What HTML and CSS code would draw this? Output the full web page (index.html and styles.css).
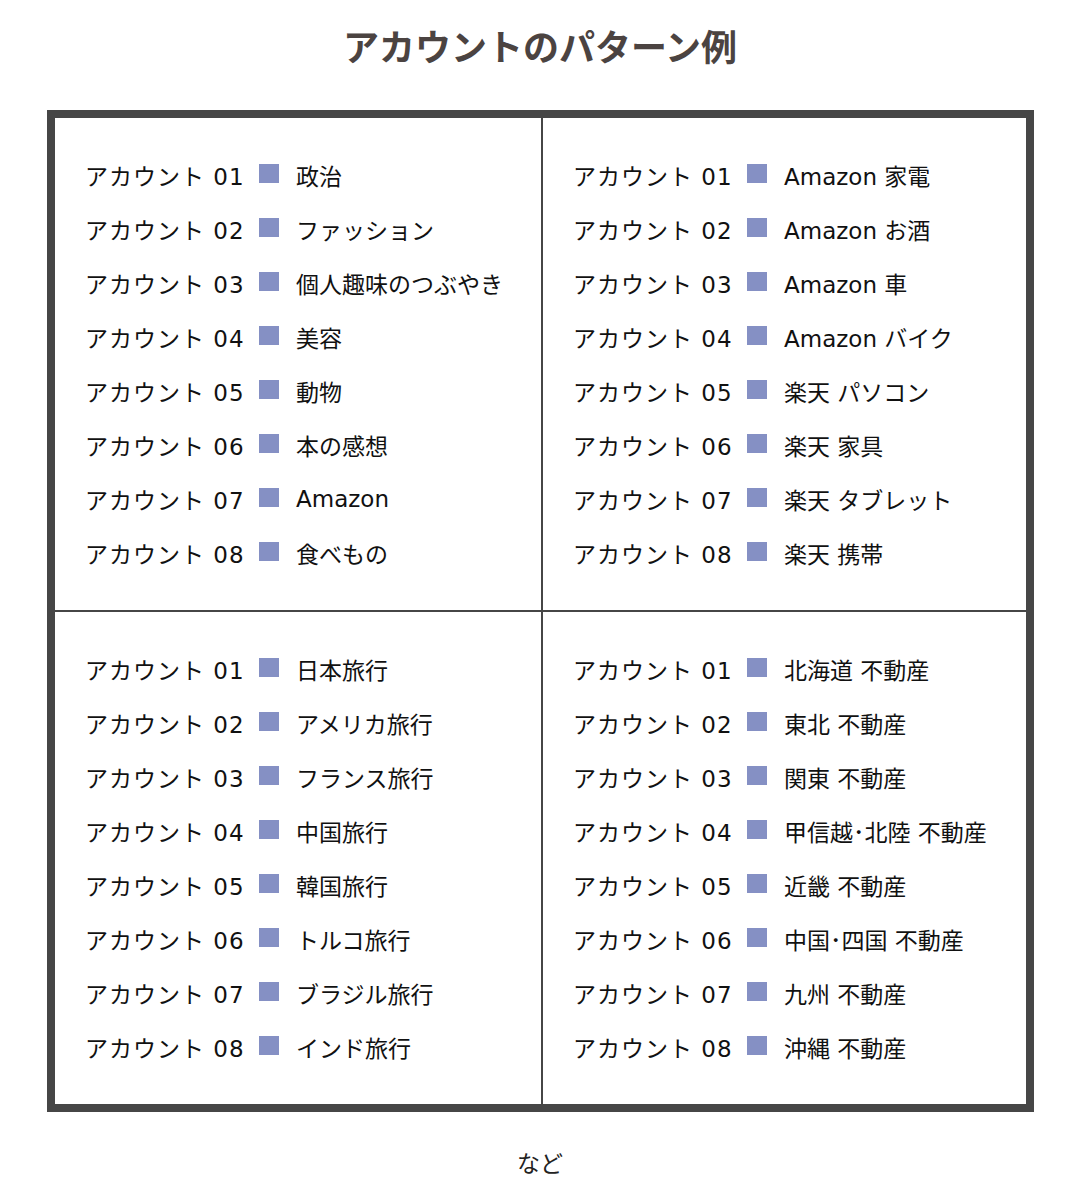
FILE: index.html
```html
<!DOCTYPE html>
<html lang="ja">
<head>
<meta charset="utf-8">
<title>アカウントのパターン例</title>
<link rel="stylesheet" href="styles.css">
</head>
<body>
<h1 class="title">アカウントのパターン例</h1>
<div class="frame">
  <div class="cell">
    <div class="row"><span class="label">アカウント 01</span><span class="sq"></span><span class="txt">政治</span></div>
    <div class="row"><span class="label">アカウント 02</span><span class="sq"></span><span class="txt">ファッション</span></div>
    <div class="row"><span class="label">アカウント 03</span><span class="sq"></span><span class="txt">個人趣味のつぶやき</span></div>
    <div class="row"><span class="label">アカウント 04</span><span class="sq"></span><span class="txt">美容</span></div>
    <div class="row"><span class="label">アカウント 05</span><span class="sq"></span><span class="txt">動物</span></div>
    <div class="row"><span class="label">アカウント 06</span><span class="sq"></span><span class="txt">本の感想</span></div>
    <div class="row"><span class="label">アカウント 07</span><span class="sq"></span><span class="txt">Amazon</span></div>
    <div class="row"><span class="label">アカウント 08</span><span class="sq"></span><span class="txt">食べもの</span></div>
  </div>
  <div class="cell">
    <div class="row"><span class="label">アカウント 01</span><span class="sq"></span><span class="txt">Amazon 家電</span></div>
    <div class="row"><span class="label">アカウント 02</span><span class="sq"></span><span class="txt">Amazon お酒</span></div>
    <div class="row"><span class="label">アカウント 03</span><span class="sq"></span><span class="txt">Amazon 車</span></div>
    <div class="row"><span class="label">アカウント 04</span><span class="sq"></span><span class="txt">Amazon バイク</span></div>
    <div class="row"><span class="label">アカウント 05</span><span class="sq"></span><span class="txt">楽天 パソコン</span></div>
    <div class="row"><span class="label">アカウント 06</span><span class="sq"></span><span class="txt">楽天 家具</span></div>
    <div class="row"><span class="label">アカウント 07</span><span class="sq"></span><span class="txt">楽天 タブレット</span></div>
    <div class="row"><span class="label">アカウント 08</span><span class="sq"></span><span class="txt">楽天 携帯</span></div>
  </div>
  <div class="cell">
    <div class="row"><span class="label">アカウント 01</span><span class="sq"></span><span class="txt">日本旅行</span></div>
    <div class="row"><span class="label">アカウント 02</span><span class="sq"></span><span class="txt">アメリカ旅行</span></div>
    <div class="row"><span class="label">アカウント 03</span><span class="sq"></span><span class="txt">フランス旅行</span></div>
    <div class="row"><span class="label">アカウント 04</span><span class="sq"></span><span class="txt">中国旅行</span></div>
    <div class="row"><span class="label">アカウント 05</span><span class="sq"></span><span class="txt">韓国旅行</span></div>
    <div class="row"><span class="label">アカウント 06</span><span class="sq"></span><span class="txt">トルコ旅行</span></div>
    <div class="row"><span class="label">アカウント 07</span><span class="sq"></span><span class="txt">ブラジル旅行</span></div>
    <div class="row"><span class="label">アカウント 08</span><span class="sq"></span><span class="txt">インド旅行</span></div>
  </div>
  <div class="cell">
    <div class="row"><span class="label">アカウント 01</span><span class="sq"></span><span class="txt">北海道 不動産</span></div>
    <div class="row"><span class="label">アカウント 02</span><span class="sq"></span><span class="txt">東北 不動産</span></div>
    <div class="row"><span class="label">アカウント 03</span><span class="sq"></span><span class="txt">関東 不動産</span></div>
    <div class="row"><span class="label">アカウント 04</span><span class="sq"></span><span class="txt">甲信越･北陸 不動産</span></div>
    <div class="row"><span class="label">アカウント 05</span><span class="sq"></span><span class="txt">近畿 不動産</span></div>
    <div class="row"><span class="label">アカウント 06</span><span class="sq"></span><span class="txt">中国･四国 不動産</span></div>
    <div class="row"><span class="label">アカウント 07</span><span class="sq"></span><span class="txt">九州 不動産</span></div>
    <div class="row"><span class="label">アカウント 08</span><span class="sq"></span><span class="txt">沖縄 不動産</span></div>
  </div>
</div>
<p class="etc">など</p>
</body>
</html>
```

FILE: styles.css
```css
html, body {
  margin: 0;
  padding: 0;
  background: #ffffff;
}
body {
  font-family: "DejaVu Sans", "Noto Sans CJK JP", sans-serif;
  color: #111111;
}
.title {
  margin: 20px 0 0;
  height: 50px;
  line-height: 50px;
  text-align: center;
  font-family: "Noto Sans CJK JP", sans-serif;
  font-size: 36px;
  font-weight: 700;
  color: #4b4341;
}
.frame {
  box-sizing: border-box;
  width: 987px;
  margin: 40px 0 0 47px;
  border: 8px solid #464646;
  background: #464646;
  display: grid;
  grid-template-columns: 486px 483px;
  grid-template-rows: 492px 492px;
  column-gap: 2px;
  row-gap: 2px;
}
.cell {
  background: #ffffff;
  padding: 30px 0 30px 30px;
  display: flex;
  flex-direction: column;
}
.row {
  height: 54px;
  display: flex;
  align-items: center;
  font-size: 23px;
  white-space: nowrap;
}
.label {
  width: 174px;
  flex: none;
  letter-spacing: 1px;
}
.sq {
  width: 20px;
  height: 19px;
  background: #8590c4;
  flex: none;
  margin-right: 17px;
  position: relative;
  top: -2px;
}
.txt {
  flex: none;
}
.etc {
  margin: 35px 0 0;
  text-align: center;
  font-family: "Noto Sans CJK JP", sans-serif;
  font-size: 23px;
  line-height: 30px;
  color: #222222;
}
```
